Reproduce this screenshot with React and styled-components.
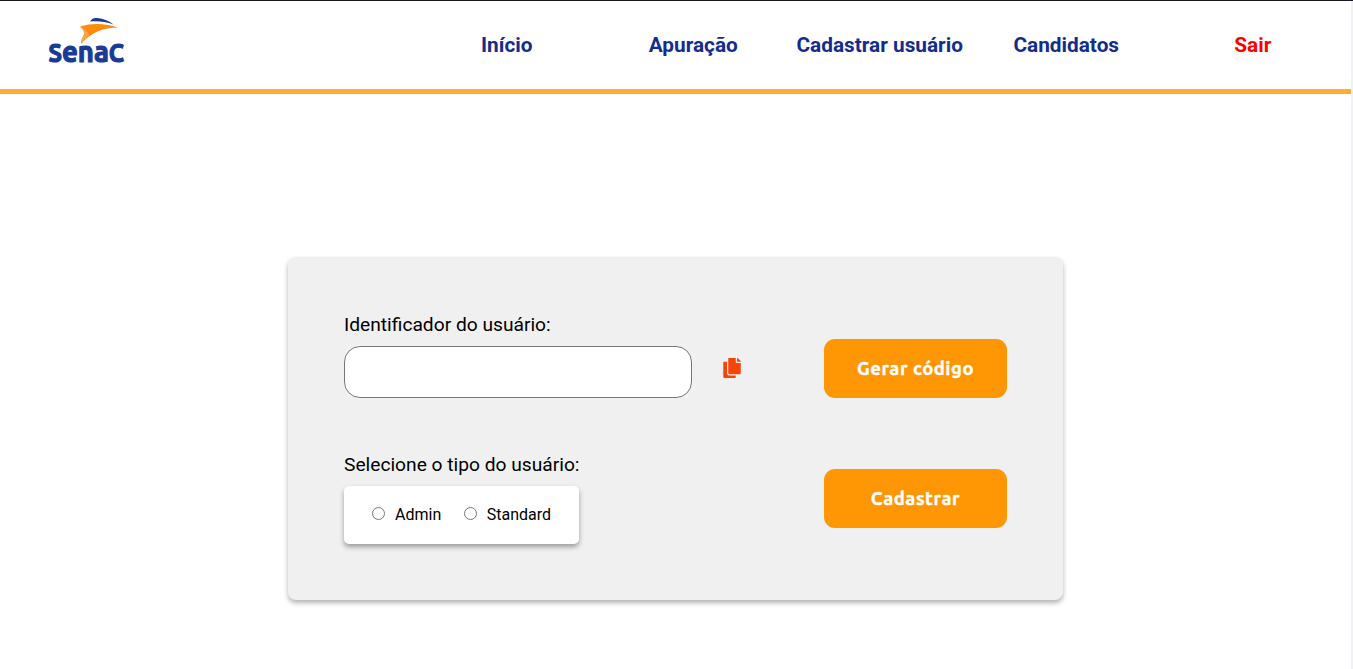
import React from "react";
import styled, { createGlobalStyle } from "styled-components";
import { FaCopy } from "react-icons/fa";

const GlobalStyle = createGlobalStyle`
  * { box-sizing: border-box; margin: 0; padding: 0; }
  body { background: #fff; font-family: Roboto, "Liberation Sans", sans-serif; color: #000; overflow: hidden; }
`;

const Page = styled.div`
  height: 669px;
  border-top: 1px solid #1a1625;
  display: flex;
`;

const Content = styled.div`
  flex: 1;
  display: flex;
  flex-direction: column;
`;

const Gutter = styled.div`
  width: 2px;
  background: #f1f0f2;
`;

const Header = styled.header`
  height: 93px;
  border-bottom: 5px solid #ffad33;
  padding: 0 5px 0 48px;
  display: flex;
  justify-content: space-between;
  align-items: center;
`;

const Logo = styled.svg`
  display: block;
  width: 77px;
  height: 58px;
  overflow: visible;
`;

const Wordmark = styled.text`
  font-family: Ubuntu, "Noto Sans", sans-serif;
  font-weight: 700;
  font-size: 29px;
  fill: #193b96;
  stroke: #193b96;
  stroke-width: 1.2px;
`;

const Capital = styled.tspan`
  font-size: 25px;
`;

const Nav = styled.nav`
  display: grid;
  grid-template-columns: repeat(5, 186.5px);
  text-align: center;
`;

const NavLink = styled.a`
  font-size: 20.8px;
  line-height: 24px;
  font-weight: 700;
  white-space: nowrap;
  color: ${(p) => (p.$danger ? "#ff0000" : "#142d8c")};
`;

const Main = styled.main`
  flex: 1;
  display: flex;
  justify-content: center;
  align-items: flex-start;
  padding-top: 163px;
`;

const Card = styled.form`
  width: 775px;
  height: 343px;
  padding: 56px;
  background: #f0f0f0;
  border-radius: 8px;
  box-shadow: 0 3px 5px rgba(0, 0, 0, 0.3);
  display: flex;
  justify-content: space-between;
`;

const Fields = styled.div`
  display: flex;
  flex-direction: column;
  gap: 55px;
`;

const Field = styled.div`
  display: flex;
  flex-direction: column;
`;

const Actions = styled.div`
  display: flex;
  flex-direction: column;
  gap: 71px;
  padding-top: 26px;
`;

const Label = styled.label`
  font-size: 19.2px;
  line-height: 23px;
  margin-bottom: 10px;
`;

const InputLine = styled.div`
  display: flex;
  align-items: center;
  gap: 30px;
`;

const CodeInput = styled.input`
  width: 348px;
  height: 52px;
  border: 1px solid #767676;
  border-radius: 16px;
  background: #fff;
  padding: 0 16px;
  font-size: 16px;
`;

const CopyButton = styled.button`
  border: 0;
  background: none;
  color: #f84406;
  font-size: 20px;
  line-height: 0;
  margin-bottom: 8px;
`;

const Options = styled.div`
  width: 235px;
  height: 58px;
  padding: 0 28px 2px;
  background: #fff;
  border-radius: 5px;
  box-shadow: 0 3px 5px rgba(0, 0, 0, 0.35);
  display: flex;
  align-items: center;
  gap: 22.5px;
`;

const Option = styled.label`
  display: flex;
  align-items: center;
  gap: 10px;
  font-size: 16px;
  line-height: 19px;
`;

const Radio = styled.input`
  width: 13px;
  height: 13px;
  margin-bottom: 2px;
`;

const Button = styled.button`
  width: 183px;
  height: 59px;
  padding-bottom: 2px;
  border: 0;
  border-radius: 11px;
  background: #ff9603;
  color: #fff;
  font-family: Ubuntu, "Noto Sans", sans-serif;
  font-weight: 700;
  font-size: 18.4px;
  letter-spacing: 0.55px;
  -webkit-text-stroke: 0.4px #fff;
`;

const links = ["Início", "Apuração", "Cadastrar usuário", "Candidatos"];

export default function App() {
  return (
    <>
      <GlobalStyle />
      <Page>
        <Content>
          <Header>
            <Logo viewBox="0 0 77 58" role="img" aria-label="Senac">
              <path d="M42 5.5 C44 2.5 46 1.5 49 2 C56 2.7 61 5 65.5 8.5 C58 5.8 50 4.8 42 5.5Z" fill="#193b96" />
              <path d="M32 10.5 C45 6.5 58 7.5 70 11.5 C55 11.5 44 16 33 28 C33 24 35 20 36.5 18 C36 15 34.5 12.5 32 10.5Z" fill="#ff8b0a" />
              <path d="M32 10.5 C34.5 12.5 36 15 36.5 18 C35 20 33 24 33 28 C36 24 39 21 41 19 C39 15 36 12 32 10.5Z" fill="#ffa445" />
              <Wordmark x="0.5" y="46.3" textLength="75.5" lengthAdjust="spacingAndGlyphs">
                <Capital>S</Capital>ena<Capital>C</Capital>
              </Wordmark>
            </Logo>
            <Nav>
              {links.map((l) => (
                <NavLink key={l}>{l}</NavLink>
              ))}
              <NavLink $danger>Sair</NavLink>
            </Nav>
          </Header>
          <Main>
            <Card>
              <Fields>
                <Field>
                  <Label htmlFor="code">Identificador do usuário:</Label>
                  <InputLine>
                    <CodeInput id="code" />
                    <CopyButton type="button" aria-label="Copiar"><FaCopy /></CopyButton>
                  </InputLine>
                </Field>
                <Field>
                  <Label as="span">Selecione o tipo do usuário:</Label>
                  <Options>
                    <Option><Radio type="radio" name="type" />Admin</Option>
                    <Option><Radio type="radio" name="type" />Standard</Option>
                  </Options>
                </Field>
              </Fields>
              <Actions>
                <Button type="button">Gerar código</Button>
                <Button type="button">Cadastrar</Button>
              </Actions>
            </Card>
          </Main>
        </Content>
        <Gutter />
      </Page>
    </>
  );
}
